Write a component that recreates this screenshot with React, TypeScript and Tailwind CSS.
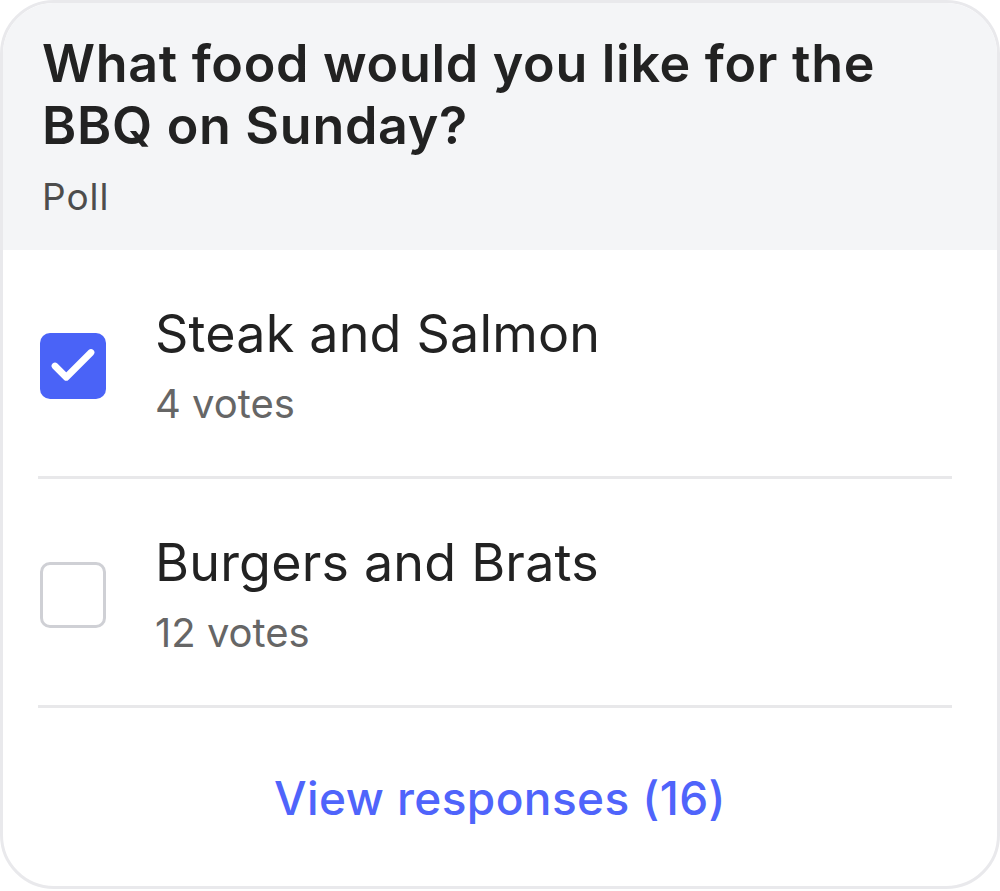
import { Check } from 'lucide-react'

interface Option {
  id: string
  label: string
  votes: number
  checked: boolean
}

const options: Option[] = [
  { id: '1', label: 'Steak and Salmon', votes: 4, checked: true },
  { id: '2', label: 'Burgers and Brats', votes: 12, checked: false },
]

function App() {
  const total = options.reduce((s, o) => s + o.votes, 0)

  return (
    <div className="w-[1000px] h-[891px] bg-white" style={{ fontFamily: 'Inter, "Noto Sans", sans-serif' }}>
      <div className="h-[889px] rounded-[54px] border-[3px] border-[#e9e9ec] overflow-hidden bg-white flex flex-col">
        {/* Header */}
        <div className="bg-[#f4f5f7] h-[247px] shrink-0 pl-[39px] pr-[30px] pt-[30px]">
          <h1 className="text-[52px] leading-[62px] font-semibold text-[#222222] tracking-[0.7px]">
            What food would you like for the
            <br />
            BBQ on Sunday?
          </h1>
          <p className="mt-[18px] text-[37px] leading-[44px] text-[#4d4d4d] tracking-[1px]">Poll</p>
        </div>

        {/* Options */}
        <div className="pl-[35px] pr-[45px]">
          {options.map((o) => (
            <div key={o.id} className="flex items-start h-[229px] border-b-[3px] border-[#e8e8ea]">
              {o.checked ? (
                <div className="mt-[83px] ml-[2px] w-[66px] h-[66px] rounded-[10px] bg-[#4a63f7] flex items-center justify-center shrink-0">
                  <Check className="w-[54px] h-[54px] text-white" strokeWidth={3} />
                </div>
              ) : (
                <div className="mt-[83px] ml-[2px] w-[66px] h-[66px] rounded-[10px] border-[3px] border-[#cfd0d5] shrink-0" />
              )}
              <div className="ml-[49px] pt-[54px]">
                <div className="text-[52px] leading-[60px] text-[#222222] tracking-[0.2px]">{o.label}</div>
                <div className="mt-[16px] text-[40px] leading-[48px] text-[#666666]">{o.votes} votes</div>
              </div>
            </div>
          ))}
        </div>

        {/* Footer */}
        <div className="pt-[62px] text-center">
          <span className="text-[46px] leading-[56px] text-[#4f64fb] font-medium tracking-[0.4px]">
            View responses ({total})
          </span>
        </div>
      </div>
    </div>
  )
}

export default App
